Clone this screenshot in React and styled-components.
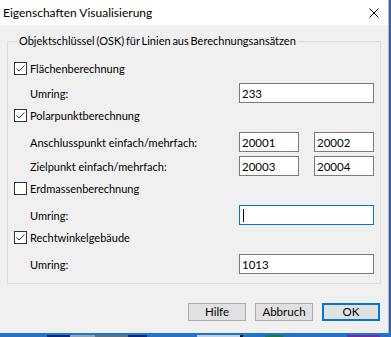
import React from 'react';
import styled, { createGlobalStyle } from 'styled-components';

const Global = createGlobalStyle`
  html, body { margin: 0; padding: 0; }
  body {
    width: 391px; height: 337px; overflow: hidden;
    background: #2f64b3;
    font-family: "Segoe UI", Lato, "Noto Sans", sans-serif;
    font-size: 11px; color: #000;
  }
  #root { width: 391px; height: 337px; }
`;

const Screen = styled.div`
  display: flex; flex-direction: column; width: 391px; height: 337px;
`;

const Window = styled.div`
  width: 388px; height: 333px; background: #f0f0f0;
  border-right: 1px solid #b9b9b9;
  display: flex; flex-direction: column;
`;

const BlueEdge = styled.div`
  height: 2px; width: 391px; background: #1a78d4;
`;

const Taskbar = styled.div`
  height: 2px; display: flex; background: #1d2f5a;
`;

const Seg = styled.div`
  width: ${p => p.$w}px; background: ${p => p.$c};
`;

const TitleBar = styled.div`
  height: 25px; background: #fff; display: flex; align-items: center;
  justify-content: space-between; padding: 0 9px 0 3px;
`;

const Title = styled.div`
  font-size: 12px; line-height: 16px; color: #000;
`;

const Body = styled.div`
  flex: 1; display: flex; flex-direction: column; padding: 9px 7px 0 7px;
`;

const Group = styled.fieldset`
  margin: 0; padding: 0 6px 9px 6px; border: 1px solid #dcdcdc;
  min-inline-size: 0;
`;

const Legend = styled.legend`
  padding: 0 2px 0 1px; margin-left: 4px; line-height: 14px; font-size: 11px;
  word-spacing: -1px;
`;

const Row = styled.div`
  display: flex; align-items: center; height: 20px; margin-top: ${p => p.$mt}px;
`;

const LabelCell = styled.div`
  width: 225px; padding-left: ${p => (p.$indent ? 16 : 0)}px; box-sizing: border-box;
  display: flex; align-items: center; white-space: nowrap;
`;

const Box = styled.span`
  width: 13px; height: 13px; box-sizing: border-box; border: 1px solid #333;
  background: #fff; display: inline-flex; align-items: center; justify-content: center;
  margin-right: 3px; flex: none;
`;

const Field = styled.div`
  width: ${p => p.$w}px; height: 20px; box-sizing: border-box;
  border: 1px solid ${p => (p.$focus ? '#0078d7' : '#7a7a7a')};
  background: #fff; display: flex; align-items: center; padding-left: 2px;
  margin-left: ${p => p.$ml || 0}px; font-size: 11.5px;
`;

const Caret = styled.span`
  width: 1px; height: 13px; background: #000; margin-left: 1px;
`;

const Buttons = styled.div`
  display: flex; justify-content: flex-end; gap: 9px; margin-top: 19px; padding-right: 1px;
`;

const Button = styled.button`
  width: 58px; height: 18px; box-sizing: border-box; padding: 0;
  background: #e1e1e1; font: inherit; font-size: 11.5px; color: #000;
  border: ${p => (p.$default ? '2px solid #0078d7' : '1px solid #adadad')};
  display: flex; align-items: center; justify-content: center; line-height: 14px;
`;

const Check = ({ checked }) => (
  <Box>
    {checked && (
      <svg width="11" height="11" viewBox="0 0 11 11">
        <path d="M1.5 5.5 L4 8 L9.5 2.5" fill="none" stroke="#333" strokeWidth="1" />
      </svg>
    )}
  </Box>
);

const Close = () => (
  <svg width="10" height="10" viewBox="0 0 10 10">
    <path d="M0.5 0.5 L9.5 9.5 M9.5 0.5 L0.5 9.5" stroke="#000" strokeWidth="1" />
  </svg>
);

const segs = [
  [47, '#2b6fc3'], [23, '#0d2a7a'], [25, '#9aa3b0'], [33, '#6b7078'], [19, '#0d2a7a'],
  [50, '#2b6fc3'], [43, '#c8d2de'], [3, '#111'], [22, '#2b6fc3'], [18, '#1a7a3a'],
  [64, '#2b6fc3'], [33, '#7a2a9a'], [11, '#2b6fc3'],
];

export default function App() {
  return (
    <>
      <Global />
      <Screen>
        <Window>
          <TitleBar>
            <Title>Eigenschaften Visualisierung</Title>
            <Close />
          </TitleBar>
          <Body>
            <Group>
              <Legend>Objektschlüssel (OSK) für Linien aus Berechnungsansätzen</Legend>
              <Row $mt={10}>
                <LabelCell><Check checked />Flächenberechnung</LabelCell>
              </Row>
              <Row $mt={5}>
                <LabelCell $indent>Umring:</LabelCell>
                <Field $w={135}>233</Field>
              </Row>
              <Row $mt={2}>
                <LabelCell><Check checked />Polarpunktberechnung</LabelCell>
              </Row>
              <Row $mt={7}>
                <LabelCell $indent>Anschlusspunkt einfach/mehrfach:</LabelCell>
                <Field $w={60}>20001</Field>
                <Field $w={60} $ml={15}>20002</Field>
              </Row>
              <Row $mt={4}>
                <LabelCell $indent>Zielpunkt einfach/mehrfach:</LabelCell>
                <Field $w={60}>20003</Field>
                <Field $w={60} $ml={15}>20004</Field>
              </Row>
              <Row $mt={2}>
                <LabelCell><Check />Erdmassenberechnung</LabelCell>
              </Row>
              <Row $mt={7}>
                <LabelCell $indent>Umring:</LabelCell>
                <Field $w={135} $focus><Caret /></Field>
              </Row>
              <Row $mt={2}>
                <LabelCell><Check checked />Rechtwinkelgebäude</LabelCell>
              </Row>
              <Row $mt={7}>
                <LabelCell $indent>Umring:</LabelCell>
                <Field $w={135}>1013</Field>
              </Row>
            </Group>
            <Buttons>
              <Button>Hilfe</Button>
              <Button>Abbruch</Button>
              <Button $default>OK</Button>
            </Buttons>
          </Body>
        </Window>
        <BlueEdge />
        <Taskbar>
          {segs.map(([w, c], i) => <Seg key={i} $w={w} $c={c} />)}
        </Taskbar>
      </Screen>
    </>
  );
}
